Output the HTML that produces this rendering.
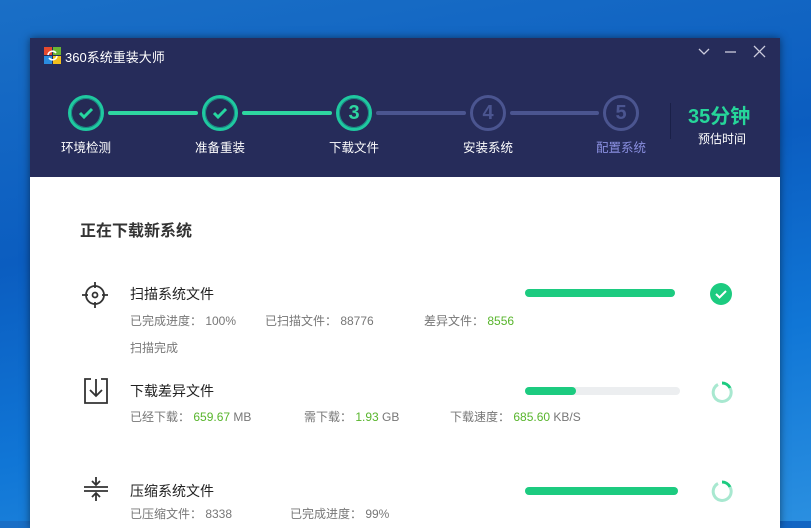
<!DOCTYPE html>
<html><head><meta charset="utf-8"><style>
*{margin:0;padding:0;box-sizing:border-box}
body{width:811px;height:521px;overflow:hidden;position:relative;background:linear-gradient(170deg,#1a6fc6 0%,#0b5dc0 40%,#1076d6 70%,#2a8fe0 100%);font-family:"Liberation Sans","Noto Sans CJK SC",sans-serif}
.win{position:absolute;left:30px;top:38px;width:750px;height:490px;background:#fff;box-shadow:0 0 8px rgba(0,0,0,.5)}
.hd{position:absolute;left:0;top:0;width:750px;height:139px;background:#262c5a}
.abs{position:absolute}
.t{color:#fff;font-size:12px;white-space:nowrap}
.c{position:absolute;width:36px;height:36px;border-radius:50%;top:57px;}
.done{border:3px solid #1fc9a0;background:#252a55;box-shadow:inset 0 0 0 1px #1a8e86}
.todo{border:3px solid #4b5590;color:#4b5590}
.num{font:bold 20px/30px "Liberation Sans",sans-serif;text-align:center}
.ln{position:absolute;top:73px;height:4px;border-radius:2px}
.lab{position:absolute;top:99px;color:#fff;font-size:12.5px;width:80px;text-align:center}
.ttl{font-size:14px;color:#222}
.sub{font-size:12px;color:#777;white-space:nowrap}
.g{color:#58b52c}
.bar{position:absolute;height:8px;border-radius:4px;background:#eceef0}
.fill{height:8px;border-radius:4px;background:#1ccb80}
</style></head><body>
<div class="win">
<div class="hd">
 <svg class="abs" style="left:14px;top:9px" width="17" height="17" viewBox="0 0 17 17"><rect x="0" y="0" width="8" height="8" fill="#e64a2e"/><rect x="9" y="0" width="8" height="8" fill="#6ab533"/><rect x="0" y="9" width="8" height="8" fill="#2a8de0"/><rect x="9" y="9" width="8" height="8" fill="#f2c01d"/><path d="M4 8a4.5 4.5 0 0 1 8-2M13 9a4.5 4.5 0 0 1-8 2" stroke="#fff" stroke-width="1.6" fill="none"/></svg>
 <div class="abs t" style="left:35px;top:9px;font-size:13px">360系统重装大师</div>
 <svg class="abs" style="left:668px;top:7px" width="70" height="14" viewBox="0 0 70 14"><path d="M1 4l5 5 5-5" stroke="#ccd" stroke-width="1.3" fill="none"/><path d="M27 7h11" stroke="#ccd" stroke-width="1.3"/><path d="M56 1l11 11M67 1L56 12" stroke="#ccd" stroke-width="1.3"/></svg>
 <div class="c done" style="left:38px"><svg width="30" height="30" viewBox="0 0 30 30"><path d="M9 15l4 4 8-8" stroke="#26d6a0" stroke-width="3" fill="none"/></svg></div>
 <div class="ln" style="left:78px;width:90px;background:#2ed6a0"></div>
 <div class="c done" style="left:172px"><svg width="30" height="30" viewBox="0 0 30 30"><path d="M9 15l4 4 8-8" stroke="#26d6a0" stroke-width="3" fill="none"/></svg></div>
 <div class="ln" style="left:212px;width:90px;background:#2ed6a0"></div>
 <div class="c done num" style="left:306px;color:#2ed6a0">3</div>
 <div class="ln" style="left:346px;width:90px;background:#4b5590"></div>
 <div class="c todo num" style="left:440px">4</div>
 <div class="ln" style="left:480px;width:89px;background:#4b5590"></div>
 <div class="c todo num" style="left:573px">5</div>
 <div class="lab" style="left:16px">环境检测</div>
 <div class="lab" style="left:150px">准备重装</div>
 <div class="lab" style="left:284px">下载文件</div>
 <div class="lab" style="left:418px">安装系统</div>
 <div class="lab" style="left:551px;color:#8a8fe0">配置系统</div>
 <div class="abs" style="left:640px;top:65px;width:1px;height:36px;background:#1a2048"></div>
 <div class="abs" style="left:658px;top:62px;color:#26d69a;font-weight:bold;font-size:20px">35分钟</div>
 <div class="abs t" style="left:668px;top:92px">预估时间</div>
</div>
<div class="abs ttl" style="left:50px;top:179px;font-size:16px;font-weight:bold;color:#333">正在下载新系统</div>

<svg class="abs" style="left:51px;top:243px" width="28" height="28" viewBox="0 0 28 28" fill="none" stroke="#333" stroke-width="1.8"><circle cx="14" cy="14" r="9"/><circle cx="14" cy="14" r="2.5"/><path d="M14 1v6M14 21v6M1 14h6M21 14h6"/></svg>
<div class="abs ttl" style="left:100px;top:246px">扫描系统文件</div>
<div class="abs sub" style="left:100px;top:274px">已完成进度： 100%</div>
<div class="abs sub" style="left:235px;top:274px">已扫描文件： 88776</div>
<div class="abs sub" style="left:394px;top:274px">差异文件： <span class="g">8556</span></div>
<div class="abs sub" style="left:100px;top:301px">扫描完成</div>
<div class="bar" style="left:495px;top:251px;width:150px"><div class="fill" style="width:150px"></div></div>
<svg class="abs" style="left:680px;top:245px" width="22" height="22" viewBox="0 0 22 22"><circle cx="11" cy="11" r="11" fill="#1ccb80"/><path d="M6 11l3.5 3.5L16 8" stroke="#fff" stroke-width="2" fill="none"/></svg>

<svg class="abs" style="left:53px;top:339px" width="26" height="28" viewBox="0 0 26 28" fill="none" stroke="#333" stroke-width="1.8"><path d="M8 2H2v24h22V2h-6M13 2v17M7 13l6 6 6-6"/></svg>
<div class="abs ttl" style="left:100px;top:343px">下载差异文件</div>
<div class="abs sub" style="left:100px;top:370px">已经下载： <span class="g">659.67</span> MB</div>
<div class="abs sub" style="left:274px;top:370px">需下载： <span class="g">1.93</span> GB</div>
<div class="abs sub" style="left:420px;top:370px">下载速度： <span class="g">685.60</span> KB/S</div>
<div class="bar" style="left:495px;top:349px;width:155px"><div class="fill" style="width:51px"></div></div>
<svg class="abs" style="left:680px;top:342px" width="24" height="24" viewBox="0 0 24 24"><path d="M8 4.5A9 9 0 1 0 20 8" stroke="#a8e8d0" stroke-width="3" fill="none"/><path d="M12 3A9 9 0 0 1 20 8" stroke="#1ccb80" stroke-width="3" fill="none"/></svg>

<svg class="abs" style="left:53px;top:438px" width="26" height="26" viewBox="0 0 26 26" fill="none" stroke="#333" stroke-width="1.8"><path d="M1 11h24M1 15h24M13 1v8M9 5l4 4 4-4M13 25v-8M9 21l4-4 4 4"/></svg>
<div class="abs ttl" style="left:100px;top:443px">压缩系统文件</div>
<div class="abs sub" style="left:100px;top:467px">已压缩文件： 8338</div>
<div class="abs sub" style="left:260px;top:467px">已完成进度： 99%</div>
<div class="bar" style="left:495px;top:449px;width:153px"><div class="fill" style="width:153px"></div></div>
<svg class="abs" style="left:680px;top:441px" width="24" height="24" viewBox="0 0 24 24"><path d="M8 4.5A9 9 0 1 0 20 8" stroke="#a8e8d0" stroke-width="3" fill="none"/><path d="M12 3A9 9 0 0 1 20 8" stroke="#1ccb80" stroke-width="3" fill="none"/></svg>
</div>
</body></html>
